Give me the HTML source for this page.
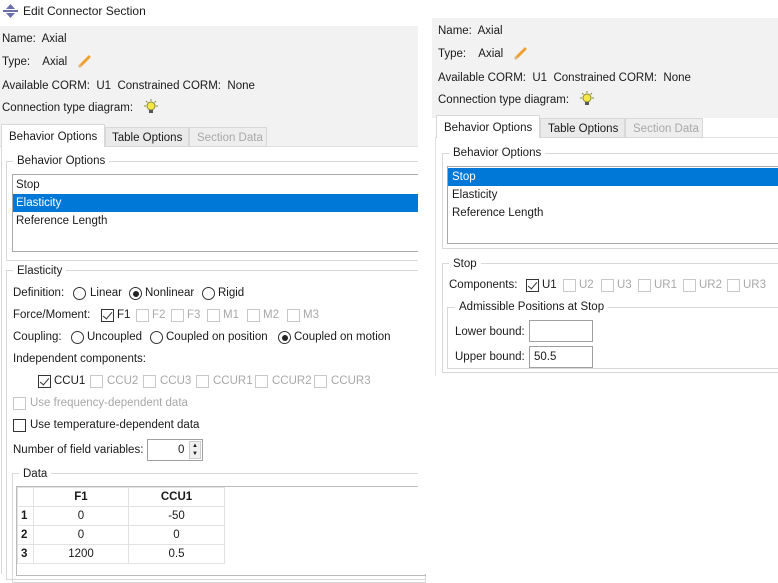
<!DOCTYPE html>
<html><head><meta charset="utf-8"><style>
*{margin:0;padding:0;box-sizing:border-box}
body{width:778px;height:574px;background:#fff;position:relative;overflow:hidden;font-family:"Liberation Sans",sans-serif;font-size:11.5px;color:#1a1a1a}
.a{position:absolute;white-space:nowrap;line-height:14px}
.g{color:#a8a8a8}
.box{position:absolute;border:1px solid #d8d8d8}
.cb{position:absolute;width:13px;height:13px;border:1px solid #333;background:#fff}
.cb.d{border-color:#c8c8c8}
.cb.c::after{content:"";position:absolute;left:3px;top:0px;width:4px;height:8px;border:solid #333;border-width:0 1.5px 1.5px 0;transform:rotate(40deg)}
.rb{position:absolute;width:13px;height:13px;border:1px solid #333;border-radius:50%;background:#fff}
.rb.s::after{content:"";position:absolute;left:2.5px;top:2.5px;width:6px;height:6px;border-radius:50%;background:#222}
.lbl{position:absolute;background:#fff;padding:0 4px;line-height:14px}
.in{position:absolute;border:1px solid #a0a0a0;background:#fff}
table{position:absolute;border-collapse:collapse;font-size:11.5px}
td{border:1px solid #e2e2e2;text-align:center;height:19px;padding:0}
</style></head><body>
<svg class="a" style="left:3px;top:4px" width="15" height="14" viewBox="0 0 15 14"><path d="M7.5 0L12 5H3Z" fill="#6a6fa8"/><path d="M7.5 14L12 9H3Z" fill="#6a6fa8"/><rect x="0" y="6" width="15" height="2" fill="#6a6fa8"/></svg>
<div class="a" style="left:23px;top:4px;font-size:12px">Edit Connector Section</div>

<div style="position:absolute;left:0;top:26px;width:418px;height:120px;background:#f2f2f2"></div>
<div class="a" style="left:2px;top:32px">Name:&nbsp; Axial</div>
<div class="a" style="left:2px;top:55px">Type:&nbsp;&nbsp;&nbsp; Axial</div>
<svg class="a" style="left:78px;top:54px" width="14" height="14" viewBox="0 0 14 14"><path d="M2 12L11 3" stroke="#f0a030" stroke-width="3" stroke-linecap="round"/><path d="M1 13L3 11" stroke="#d8b890" stroke-width="2"/></svg>
<div class="a" style="left:2px;top:79px">Available CORM:&nbsp; U1&nbsp;&nbsp;Constrained CORM:&nbsp; None</div>
<div class="a" style="left:2px;top:101px">Connection type diagram:</div>
<svg class="a" style="left:143px;top:99px" width="16" height="16" viewBox="0 0 16 16"><circle cx="8" cy="7" r="4" fill="#f5e64a" stroke="#8a8a30"/><rect x="6" y="11" width="4" height="3" fill="#555"/><path d="M8 0v2M1 7h2M13 7h2M3 2l1.5 1.5M13 2l-1.5 1.5" stroke="#8a8a30"/></svg>
<div style="position:absolute;left:0;top:146px;width:418px;height:1px;background:#e0e0e0"></div>
<div style="position:absolute;left:1px;top:124px;width:104px;height:23px;background:#fff;border:1px solid #d8d8d8;border-bottom:none"></div>
<div class="a" style="left:9px;top:130px">Behavior Options</div>
<div style="position:absolute;left:105px;top:127px;width:84px;height:20px;background:#eaeaea;border:1px solid #d8d8d8"></div>
<div class="a" style="left:112px;top:131px">Table Options</div>
<div style="position:absolute;left:189px;top:127px;width:78px;height:20px;background:#eeeeee;border:1px solid #d8d8d8"></div>
<div class="a g" style="left:197px;top:131px">Section Data</div>
<div style="position:absolute;left:1px;top:147px;width:1px;height:427px;background:#d8d8d8"></div>

<div class="box" style="left:6px;top:161px;width:420px;height:100px"></div>
<div class="lbl" style="left:13px;top:154px">Behavior Options</div>
<div class="in" style="left:12px;top:174px;width:410px;height:78px;border-color:#a8a8a8"></div>
<div class="a" style="left:16px;top:178px">Stop</div>
<div style="position:absolute;left:13px;top:194px;width:405px;height:18px;background:#0078d7"></div>
<div class="a" style="left:16px;top:196px;color:#fff">Elasticity</div>
<div class="a" style="left:16px;top:214px">Reference Length</div>

<div class="box" style="left:6px;top:270px;width:420px;height:310px"></div>
<div class="lbl" style="left:13px;top:264px">Elasticity</div>
<div class="a" style="left:13px;top:286px">Definition:</div>
<div class="rb" style="left:73px;top:287px"></div><div class="a" style="left:90px;top:286px">Linear</div>
<div class="rb s" style="left:129px;top:287px"></div><div class="a" style="left:145px;top:286px">Nonlinear</div>
<div class="rb" style="left:202px;top:287px"></div><div class="a" style="left:218px;top:286px">Rigid</div>
<div class="a" style="left:13px;top:308px">Force/Moment:</div>
<div class="cb c" style="left:101px;top:309px"></div><div class="a" style="left:117px;top:308px">F1</div>
<div class="cb d" style="left:136px;top:309px"></div><div class="a g" style="left:152px;top:308px">F2</div>
<div class="cb d" style="left:171px;top:309px"></div><div class="a g" style="left:187px;top:308px">F3</div>
<div class="cb d" style="left:207px;top:309px"></div><div class="a g" style="left:223px;top:308px">M1</div>
<div class="cb d" style="left:247px;top:309px"></div><div class="a g" style="left:263px;top:308px">M2</div>
<div class="cb d" style="left:287px;top:309px"></div><div class="a g" style="left:303px;top:308px">M3</div>
<div class="a" style="left:13px;top:330px">Coupling:</div>
<div class="rb" style="left:71px;top:331px"></div><div class="a" style="left:87px;top:330px">Uncoupled</div>
<div class="rb" style="left:150px;top:331px"></div><div class="a" style="left:166px;top:330px">Coupled on position</div>
<div class="rb s" style="left:278px;top:331px"></div><div class="a" style="left:294px;top:330px">Coupled on motion</div>
<div class="a" style="left:13px;top:352px">Independent components:</div>
<div class="cb c" style="left:38px;top:375px"></div><div class="a" style="left:54px;top:374px">CCU1</div>
<div class="cb d" style="left:90px;top:375px"></div><div class="a g" style="left:107px;top:374px">CCU2</div>
<div class="cb d" style="left:143px;top:375px"></div><div class="a g" style="left:160px;top:374px">CCU3</div>
<div class="cb d" style="left:196px;top:375px"></div><div class="a g" style="left:213px;top:374px">CCUR1</div>
<div class="cb d" style="left:255px;top:375px"></div><div class="a g" style="left:272px;top:374px">CCUR2</div>
<div class="cb d" style="left:314px;top:375px"></div><div class="a g" style="left:331px;top:374px">CCUR3</div>
<div class="cb d" style="left:13px;top:397px"></div><div class="a g" style="left:30px;top:396px">Use frequency-dependent data</div>
<div class="cb" style="left:13px;top:419px"></div><div class="a" style="left:30px;top:418px">Use temperature-dependent data</div>
<div class="a" style="left:13px;top:443px">Number of field variables:</div>
<div class="in" style="left:147px;top:439px;width:56px;height:22px"></div>
<div class="a" style="left:178px;top:443px">0</div>
<div style="position:absolute;left:189px;top:441px;width:12px;height:18px;background:#f0f0f0;border:1px solid #ccc;font-size:6px;line-height:8px;text-align:center">&#9650;<br>&#9660;</div>

<div class="box" style="left:12px;top:473px;width:414px;height:110px"></div>
<div class="lbl" style="left:19px;top:467px">Data</div>
<div class="in" style="left:16px;top:486px;width:410px;height:90px;border-color:#bbb"></div>
<table style="left:17px;top:487px">
<tr><td style="width:16px"></td><td style="width:95px;font-weight:bold">F1</td><td style="width:96px;font-weight:bold">CCU1</td></tr>
<tr><td style="font-weight:bold;text-align:left;padding-left:3px">1</td><td>0</td><td>-50</td></tr>
<tr><td style="font-weight:bold;text-align:left;padding-left:3px">2</td><td>0</td><td>0</td></tr>
<tr><td style="font-weight:bold;text-align:left;padding-left:3px">3</td><td>1200</td><td>0.5</td></tr>
</table>
<div style="position:absolute;left:418px;top:147px;width:14px;height:427px;background:#fff"></div>

<div style="position:absolute;left:432px;top:18px;width:346px;height:100px;background:#f2f2f2"></div>
<div class="a" style="left:438px;top:24px">Name:&nbsp; Axial</div>
<div class="a" style="left:438px;top:47px">Type:&nbsp;&nbsp;&nbsp; Axial</div>
<svg class="a" style="left:514px;top:46px" width="14" height="14" viewBox="0 0 14 14"><path d="M2 12L11 3" stroke="#f0a030" stroke-width="3" stroke-linecap="round"/><path d="M1 13L3 11" stroke="#d8b890" stroke-width="2"/></svg>
<div class="a" style="left:438px;top:71px">Available CORM:&nbsp; U1&nbsp;&nbsp;Constrained CORM:&nbsp; None</div>
<div class="a" style="left:438px;top:93px">Connection type diagram:</div>
<svg class="a" style="left:579px;top:91px" width="16" height="16" viewBox="0 0 16 16"><circle cx="8" cy="7" r="4" fill="#f5e64a" stroke="#8a8a30"/><rect x="6" y="11" width="4" height="3" fill="#555"/><path d="M8 0v2M1 7h2M13 7h2M3 2l1.5 1.5M13 2l-1.5 1.5" stroke="#8a8a30"/></svg>
<div style="position:absolute;left:435px;top:137px;width:343px;height:1px;background:#e0e0e0"></div>
<div style="position:absolute;left:435px;top:138px;width:1px;height:238px;background:#e0e0e0"></div>
<div style="position:absolute;left:436px;top:115px;width:104px;height:23px;background:#fff;border:1px solid #d8d8d8;border-bottom:none"></div>
<div class="a" style="left:444px;top:121px">Behavior Options</div>
<div style="position:absolute;left:540px;top:118px;width:85px;height:20px;background:#eaeaea;border:1px solid #d8d8d8"></div>
<div class="a" style="left:548px;top:122px">Table Options</div>
<div style="position:absolute;left:625px;top:118px;width:78px;height:20px;background:#eeeeee;border:1px solid #d8d8d8"></div>
<div class="a g" style="left:633px;top:122px">Section Data</div>

<div class="box" style="left:442px;top:153px;width:340px;height:96px"></div>
<div class="lbl" style="left:449px;top:146px">Behavior Options</div>
<div class="in" style="left:447px;top:166px;width:335px;height:78px;border-color:#a8a8a8"></div>
<div style="position:absolute;left:448px;top:168px;width:330px;height:18px;background:#0078d7"></div>
<div class="a" style="left:452px;top:170px;color:#fff">Stop</div>
<div class="a" style="left:452px;top:188px">Elasticity</div>
<div class="a" style="left:452px;top:206px">Reference Length</div>

<div class="box" style="left:442px;top:263px;width:340px;height:110px"></div>
<div class="lbl" style="left:449px;top:257px">Stop</div>
<div class="a" style="left:449px;top:278px">Components:</div>
<div class="cb c" style="left:526px;top:279px"></div><div class="a" style="left:542px;top:278px">U1</div>
<div class="cb d" style="left:563px;top:279px"></div><div class="a g" style="left:579px;top:278px">U2</div>
<div class="cb d" style="left:601px;top:279px"></div><div class="a g" style="left:617px;top:278px">U3</div>
<div class="cb d" style="left:638px;top:279px"></div><div class="a g" style="left:654px;top:278px">UR1</div>
<div class="cb d" style="left:683px;top:279px"></div><div class="a g" style="left:699px;top:278px">UR2</div>
<div class="cb d" style="left:727px;top:279px"></div><div class="a g" style="left:743px;top:278px">UR3</div>
<div class="box" style="left:447px;top:307px;width:335px;height:62px"></div>
<div class="lbl" style="left:455px;top:300px">Admissible Positions at Stop</div>
<div class="a" style="left:455px;top:325px">Lower bound:</div>
<div class="in" style="left:529px;top:320px;width:64px;height:22px"></div>
<div class="a" style="left:455px;top:350px">Upper bound:</div>
<div class="in" style="left:529px;top:346px;width:64px;height:22px"></div>
<div class="a" style="left:534px;top:350px">50.5</div>
</body></html>
